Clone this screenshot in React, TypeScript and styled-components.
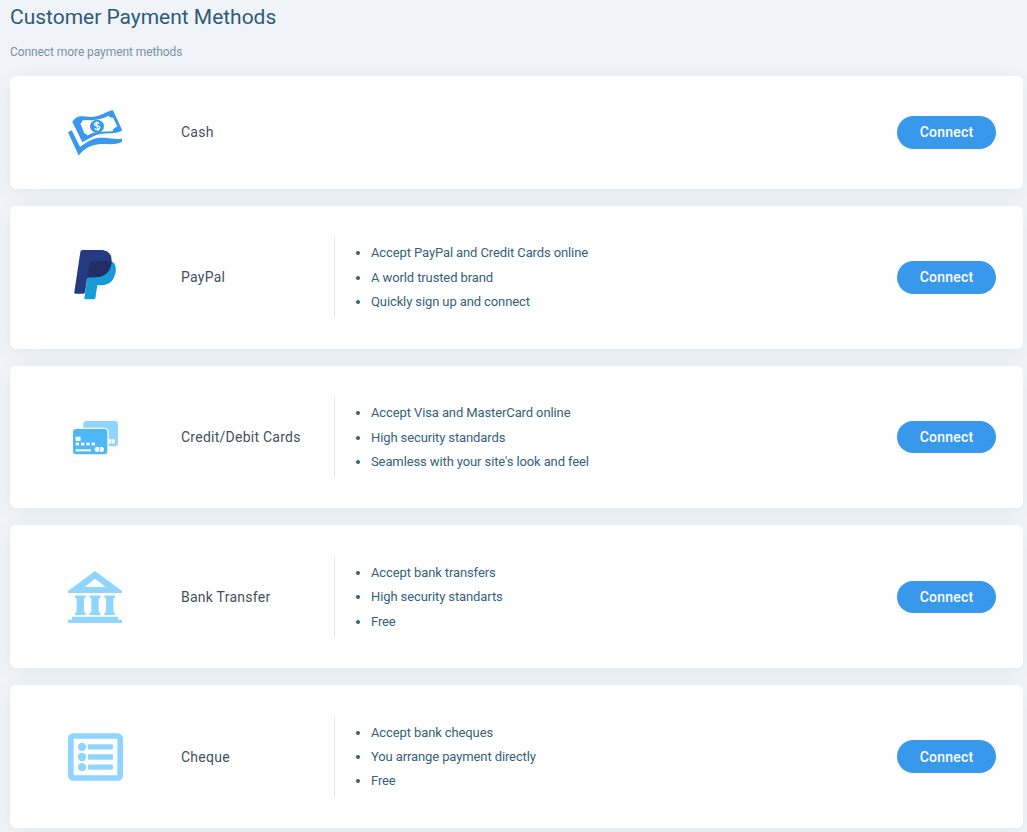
import React from 'react';
import styled, { createGlobalStyle } from 'styled-components';

const GlobalStyle = createGlobalStyle`
  body { margin: 0; background: #f0f4f8; font-family: Roboto, "Liberation Sans", sans-serif; overflow: hidden; }
  * { box-sizing: border-box; }
`;
const Page = styled.main`
  height: 832px;
  overflow: hidden;
  padding: 4px 4px 0 10px;
`;
const Title = styled.h1`
  margin: 0;
  font-size: 21px;
  line-height: 26px;
  font-weight: 400;
  letter-spacing: -0.02px;
  color: #2f5a78;
`;
const Subtitle = styled.p`
  margin: 14px 0 15px;
  font-size: 12px;
  line-height: 17px;
  letter-spacing: -0.08px;
  color: #7a92a5;
`;
const Methods = styled.section`
  display: flex;
  flex-direction: column;
  gap: 17px;
`;
const Card = styled.article<{ $compact: boolean }>`
  display: flex;
  align-items: center;
  flex-shrink: 0;
  height: ${p => (p.$compact ? 112.9 : 142.75)}px;
  padding: 0 27px 0 50px;
  border-radius: 6px;
  background: #fff;
  box-shadow: 0 4px 20px rgba(50, 75, 85, 0.065);
`;
const Icon = styled.svg`
  width: 70px;
  height: 70px;
  flex: none;
`;
const Name = styled.h2`
  width: 153px;
  margin: 0 0 0 51px;
  font-size: 14px;
  line-height: 20px;
  font-weight: 400;
  letter-spacing: 0.25px;
  color: #3f5160;
`;
const Features = styled.ul`
  height: 80px;
  margin: 0;
  padding: 4.15px 0 0 36px;
  border-left: 1px solid #e3e6e8;
  font-size: 13px;
  line-height: 24.4px;
  letter-spacing: -0.11px;
  color: #345f7e;
`;
const Connect = styled.button`
  width: 99px;
  height: 32.5px;
  margin-left: auto;
  padding: 0;
  border: 0;
  border-radius: 17px;
  background: #3899ec;
  color: #fff;
  font: 500 14px Roboto, "Liberation Sans", sans-serif;
  letter-spacing: 0.2px;
`;

const CashIcon = () => (
  <Icon viewBox="15 -10.5 210 210" fill="#3899ec">
    <path fillRule="evenodd" d="M52 64C72 34 93 56 125 47C146 41 157 31 174 29L202 90C175 104 149 94 122 104C106 110 95 119 82 125ZM76 69L88 98Q95 99 97 105Q114 95 135 94Q155 92 173 92Q173 83 187 78L174 51Q165 53 160 46Q134 60 106 59Q90 58 82 60Q83 67 76 69Z" />
    <path d="M39 95L50 89L75 139C98 124 112 113 136 112C163 110 183 119 201 114V124C179 137 153 128 127 132C101 136 85 148 71 165Z" />
    <ellipse cx="126" cy="77" rx="21" ry="19" />
    <path d="M133 69C127 64 117 67 119 73C121 79 134 73 134 81C134 87 124 90 119 84M124 63L129 91" fill="none" stroke="#fff" strokeWidth="4" />
  </Icon>
);
const PayPalIcon = () => (
  <Icon viewBox="0 6 210 210">
    <path fill="#179bd7" d="M90 64H154C164 68 170 80 167 96C163 120 150 136 123 136H112L106 175Q105 178 101 178H76Q72 178 73 173Z" />
    <path fill="#253b80" d="M67 30H122C147 30 158 46 154 70C149 99 131 112 103 112H88Q82 112 81 118L75 157Q74 161 70 161H46Q42 161 43 156L61 36Q62 30 67 30Z" />
    <path fill="#222d65" d="M97 63H145L155 66C151 98 133 112 103 112H88Q84 112 82 115L89 70Q90 63 97 63Z" />
  </Icon>
);
const CardsIcon = () => (
  <Icon viewBox="0 -24 210 210">
    <rect x="70" y="33" width="104" height="76" rx="9" fill="#8fd5ff" />
    <g fill="#fff"><circle cx="148" cy="94" r="7" /><circle cx="158" cy="94" r="7" /></g>
    <path d="M153 88Q158 94 153 100" fill="none" stroke="#8fd5ff" strokeWidth="2" />
    <rect x="37" y="55" width="107" height="80" rx="11" fill="#4eb7f5" stroke="#fff" strokeWidth="4" />
    <g fill="#fff">
      <rect x="47" y="80" width="15" height="13" rx="2" />
      <rect x="47" y="98" width="10" height="8" /><rect x="63" y="98" width="10" height="8" /><rect x="79" y="98" width="10" height="8" /><rect x="95" y="98" width="10" height="8" />
      <rect x="47" y="118" width="46" height="6" />
      <circle cx="112" cy="118" r="8" /><circle cx="124" cy="118" r="8" />
    </g>
    <path d="M117 110Q123 118 117 126" fill="none" stroke="#4eb7f5" strokeWidth="2.5" />
  </Icon>
);
const BankIcon = () => (
  <Icon viewBox="0 -3.3 210 210" fill="#8fd5ff">
    <path fillRule="evenodd" d="M105 24L186 84V90H24V84ZM105 47L74 72H137Z" />
    {[45, 89, 133].map(x => (
      <path key={x} d={`M${x} 97H${x + 32}V103Q${x + 27} 105 ${x + 27} 109V142Q${x + 27} 148 ${x + 32} 150V156H${x}V150Q${x + 5} 148 ${x + 5} 142V109Q${x + 5} 105 ${x} 103Z`} />
    ))}
    <path d="M36 161H174V170H186V180H24V170H36Z" />
  </Icon>
);
const ChequeIcon = () => (
  <Icon viewBox="0 -9.5 210 210" fill="#8fd5ff">
    <rect x="32.5" y="32.5" width="148" height="126" rx="7" fill="none" stroke="#8fd5ff" strokeWidth="17" />
    {[65, 95.5, 126].map(y => (
      <g key={y}><circle cx="66" cy={y} r="12.5" /><rect x="84" y={y - 8} width="75" height="16" rx="3" /></g>
    ))}
  </Icon>
);

const methods = [
  { name: 'Cash', icon: CashIcon, features: [] },
  { name: 'PayPal', icon: PayPalIcon, features: ['Accept PayPal and Credit Cards online', 'A world trusted brand', 'Quickly sign up and connect'] },
  { name: 'Credit/Debit Cards', icon: CardsIcon, features: ['Accept Visa and MasterCard online', 'High security standards', "Seamless with your site's look and feel"] },
  { name: 'Bank Transfer', icon: BankIcon, features: ['Accept bank transfers', 'High security standarts', 'Free'] },
  { name: 'Cheque', icon: ChequeIcon, features: ['Accept bank cheques', 'You arrange payment directly', 'Free'] },
];

export default function App() {
  return (
    <Page>
      <GlobalStyle />
      <Title>Customer Payment Methods</Title>
      <Subtitle>Connect more payment methods</Subtitle>
      <Methods>
        {methods.map(({ name, icon: MethodIcon, features }) => (
          <Card key={name} $compact={features.length === 0}>
            <MethodIcon />
            <Name>{name}</Name>
            {features.length > 0 && (
              <Features>{features.map(f => <li key={f}>{f}</li>)}</Features>
            )}
            <Connect>Connect</Connect>
          </Card>
        ))}
      </Methods>
    </Page>
  );
}
